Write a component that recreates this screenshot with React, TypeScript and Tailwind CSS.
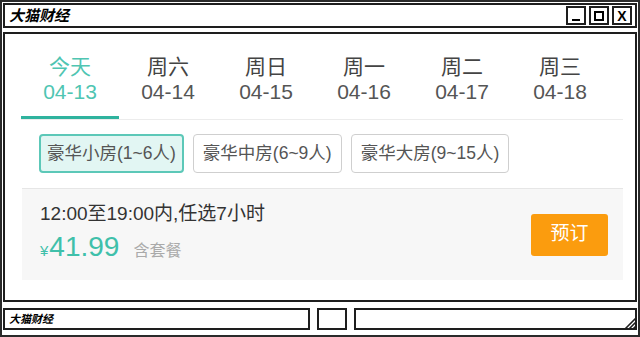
import React, {useState} from 'react';

const tabs = [
    {day: '今天', date: '04-13'},
    {day: '周六', date: '04-14'},
    {day: '周日', date: '04-15'},
    {day: '周一', date: '04-16'},
    {day: '周二', date: '04-17'},
    {day: '周三', date: '04-18'},
];

const rooms = ['豪华小房(1~6人)', '豪华中房(6~9人)', '豪华大房(9~15人)'];

const font = {fontFamily: '"Liberation Sans", "Noto Sans CJK SC", sans-serif'};

const App: React.FC = () => {
    const [activeTab, setActiveTab] = useState(0);
    const [activeRoom, setActiveRoom] = useState(0);

    return (
        <div
            className="w-[640px] h-[337px] bg-white border-2 border-[#2a2a2a] p-[1px] flex flex-col overflow-hidden"
            style={font}
        >
            {/* Title bar */}
            <div className="h-[25px] shrink-0 border-2 border-[#1e1e1e] flex items-center justify-between pl-[4px] pr-[3px]">
                <span className="text-[15px] font-bold italic text-black leading-none">大猫财经</span>
                <div className="flex items-center gap-[3px]">
                    <div className="w-[20px] h-[19px] border-2 border-[#1e1e1e] flex items-end justify-center pb-[2px]">
                        <div className="w-[8px] h-[2px] bg-black" />
                    </div>
                    <div className="w-[20px] h-[19px] border-2 border-[#1e1e1e] flex items-center justify-center">
                        <div className="w-[10px] h-[10px] border-2 border-black" />
                    </div>
                    <div className="w-[20px] h-[19px] border-2 border-[#1e1e1e] flex items-center justify-center">
                        <span className="text-[14px] font-bold leading-none text-black">X</span>
                    </div>
                </div>
            </div>

            {/* Main content */}
            <div className="flex-1 mt-[4px] border-2 border-[#1e1e1e] pl-[16px] pr-[12px]">
                {/* Date tabs */}
                <div className="flex border-b border-[#ececec]">
                    {tabs.map((t, i) => (
                        <button
                            key={t.date}
                            onClick={() => setActiveTab(i)}
                            className="w-[98px] flex flex-col items-center pt-[20px]"
                        >
                            <span
                                className={`text-[21px] leading-[25px] ${i === activeTab ? 'text-[#4fc5b2]' : 'text-[#444]'}`}
                            >
                                {t.day}
                            </span>
                            <span
                                className={`text-[21px] leading-[25px] ${i === activeTab ? 'text-[#4fc5b2]' : 'text-[#555]'}`}
                            >
                                {t.date}
                            </span>
                            <div
                                className={`mt-[12px] h-[3px] w-full ${i === activeTab ? 'bg-[#2fb39e]' : 'bg-transparent'}`}
                            />
                        </button>
                    ))}
                </div>

                {/* Room types */}
                <div className="flex gap-[9px] pl-[18px] pt-[14px] pb-[15px]">
                    {rooms.map((r, i) => (
                        <button
                            key={r}
                            onClick={() => setActiveRoom(i)}
                            className={`h-[39px] rounded-[4px] text-[17.5px] text-[#555] ${
                                i === activeRoom
                                    ? 'px-[6px] border-2 border-[#5cc8b8] bg-[#e2f6f3]'
                                    : 'px-[9px] border border-[#cfcfcf] bg-white'
                            }`}
                        >
                            {r}
                        </button>
                    ))}
                </div>

                {/* Price panel */}
                <div className="ml-[1px] border-t border-[#e6e6e6] bg-[#f7f7f7] h-[92px] flex items-center justify-between pl-[18px] pr-[15px]">
                    <div className="flex flex-col">
                        <span className="text-[19px] leading-[24px] text-[#333]">12:00至19:00内,任选7小时</span>
                        <div className="flex items-baseline mt-[4px] leading-[34px]">
                            <span className="text-[15px] text-[#3fc0aa] mr-[1px]">¥</span>
                            <span className="text-[28px] text-[#3fc0aa]">41.99</span>
                            <span className="text-[16px] text-[#aaa] ml-[14px]">含套餐</span>
                        </div>
                    </div>
                    <button className="w-[77px] h-[42px] rounded-[3px] bg-[#fb9c0e] text-white text-[19px]">
                        预订
                    </button>
                </div>
            </div>

            {/* Status bar */}
            <div className="h-[22px] shrink-0 mt-[6px] mb-[4px] flex gap-[7px]">
                <div className="w-[307px] border-2 border-[#1e1e1e] flex items-center pl-[4px]">
                    <span className="text-[11px] font-bold italic text-black leading-none">大猫财经</span>
                </div>
                <div className="w-[30px] border-2 border-[#1e1e1e]" />
                <div className="flex-1 border-2 border-[#1e1e1e] flex items-end justify-end">
                    <svg width="16" height="16" viewBox="0 0 16 16" className="mb-[-2px] mr-[-2px]">
                        <path d="M15 4 L4 15 M15 8 L8 15 M15 12 L12 15" stroke="#1e1e1e" strokeWidth="1.6" />
                    </svg>
                </div>
            </div>
        </div>
    );
};

export default App;
